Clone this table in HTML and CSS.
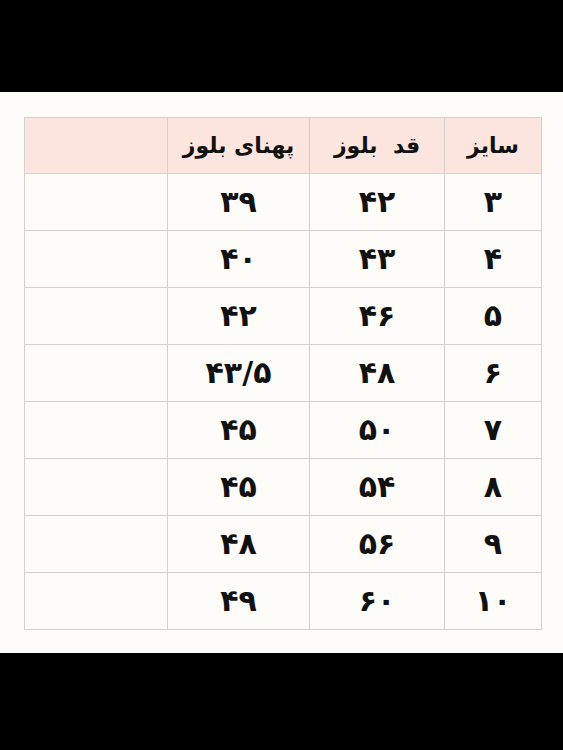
FILE: index.html
```html
<!DOCTYPE html>
<html lang="fa">
<head>
<meta charset="utf-8">
<link rel="stylesheet" href="styles.css">
</head>
<body>
<div class="bar"></div>
<main class="sheet">
  <table class="sizes" dir="rtl">
    <colgroup>
      <col class="c1"><col class="c2"><col class="c3"><col class="c4">
    </colgroup>
    <thead>
      <tr><th>سایز</th><th>قد&nbsp; بلوز</th><th>پهنای بلوز</th><th></th></tr>
    </thead>
    <tbody>
      <tr><td>۳</td><td>۴۲</td><td>۳۹</td><td></td></tr>
      <tr><td>۴</td><td>۴۳</td><td>۴۰</td><td></td></tr>
      <tr><td>۵</td><td>۴۶</td><td>۴۲</td><td></td></tr>
      <tr><td>۶</td><td>۴۸</td><td>۴۳/۵</td><td></td></tr>
      <tr><td>۷</td><td>۵۰</td><td>۴۵</td><td></td></tr>
      <tr><td>۸</td><td>۵۴</td><td>۴۵</td><td></td></tr>
      <tr><td>۹</td><td>۵۶</td><td>۴۸</td><td></td></tr>
      <tr><td>۱۰</td><td>۶۰</td><td>۴۹</td><td></td></tr>
    </tbody>
  </table>
</main>
<div class="bar bottom"></div>
</body>
</html>
```
FILE: styles.css
```css
html, body {
  margin: 0;
  padding: 0;
  background: #000;
}
body {
  width: 563px;
  height: 750px;
  display: flex;
  flex-direction: column;
}
.bar {
  height: 92px;
  background: #000;
}
.bar.bottom {
  flex: 1;
}
.sheet {
  height: 561px;
  background: #fdfcf9;
  padding: 25px 22px 0 24px;
  box-sizing: border-box;
}
.sizes {
  border-collapse: collapse;
  table-layout: fixed;
  width: 517px;
  font-family: "DejaVu Sans", sans-serif;
  font-weight: bold;
  color: #111;
}
.c1 { width: 97px; }
.c2 { width: 135px; }
.c3 { width: 142px; }
.c4 { width: 143px; }
.sizes th,
.sizes td {
  border: 1px solid #d3d1ce;
  height: 56px;
  padding: 0;
  text-align: center;
  vertical-align: middle;
  font-size: 30px;
  line-height: 1;
}
.sizes th {
  background: #fce5df;
  height: 55px;
  font-size: 22px;
}
```
